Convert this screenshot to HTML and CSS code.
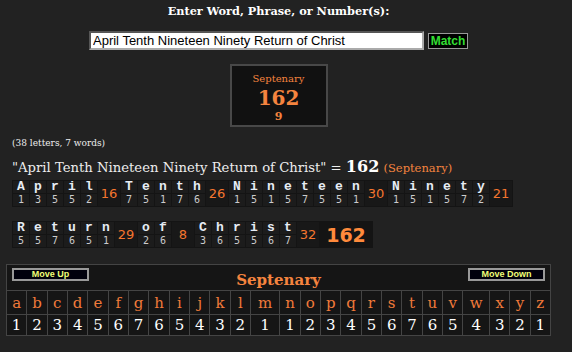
FILE: index.html
```html
<!DOCTYPE html>
<html lang="en">
<head>
    <meta charset="UTF-8">
    <meta name="viewport" content="width=device-width, initial-scale=1.0">
    <title>Gematria Calculator</title>
    <link rel="stylesheet" href="styles.css">
</head>
<body>
    <div class="top">
        <div class="prompt">Enter Word, Phrase, or Number(s):</div>
        <div class="form-row">
            <input type="text" class="phrase" value="April Tenth Nineteen Ninety Return of Christ">
            <button class="match">Match</button>
        </div>
        <div class="cipher-box">
            <div class="cipher-name">Septenary</div>
            <div class="cipher-total">162</div>
            <div class="cipher-root">9</div>
        </div>
    </div>

    <div class="summary">
        <div class="counts">(38 letters, 7 words)</div>
        <div class="phrase-line">"April Tenth Nineteen Ninety Return of Christ" = <b>162</b> <span class="cname">(Septenary)</span></div>
    </div>

    <table class="breakdown">
        <tr>
            <td>A</td><td>p</td><td>r</td><td>i</td><td>l</td><td class="sum" rowspan="2">16</td>
            <td>T</td><td>e</td><td>n</td><td>t</td><td>h</td><td class="sum" rowspan="2">26</td>
            <td>N</td><td>i</td><td>n</td><td>e</td><td>t</td><td>e</td><td>e</td><td>n</td><td class="sum" rowspan="2">30</td>
            <td>N</td><td>i</td><td>n</td><td>e</td><td>t</td><td>y</td><td class="sum" rowspan="2">21</td>
        </tr>
        <tr class="nums">
            <td>1</td><td>3</td><td>5</td><td>5</td><td>2</td>
            <td>7</td><td>5</td><td>1</td><td>7</td><td>6</td>
            <td>1</td><td>5</td><td>1</td><td>5</td><td>7</td><td>5</td><td>5</td><td>1</td>
            <td>1</td><td>5</td><td>1</td><td>5</td><td>7</td><td>2</td>
        </tr>
    </table>

    <table class="breakdown second">
        <tr>
            <td>R</td><td>e</td><td>t</td><td>u</td><td>r</td><td>n</td><td class="sum" rowspan="2">29</td>
            <td>o</td><td>f</td><td class="sum" rowspan="2">8</td>
            <td>C</td><td>h</td><td>r</td><td>i</td><td>s</td><td>t</td><td class="sum" rowspan="2">32</td>
            <td class="total" rowspan="2">162</td>
        </tr>
        <tr class="nums">
            <td>5</td><td>5</td><td>7</td><td>6</td><td>5</td><td>1</td>
            <td>2</td><td>6</td>
            <td>3</td><td>6</td><td>5</td><td>5</td><td>6</td><td>7</td>
        </tr>
    </table>

    <table class="chart">
        <tr class="chart-head">
            <td colspan="26">
                <div class="head-row">
                    <button class="move">Move Up</button>
                    <span class="chart-title">Septenary</span>
                    <button class="move">Move Down</button>
                </div>
            </td>
        </tr>
        <tr class="chart-letters">
            <td>a</td><td>b</td><td>c</td><td>d</td><td>e</td><td>f</td><td>g</td><td>h</td><td>i</td><td>j</td><td>k</td><td>l</td><td>m</td>
            <td>n</td><td>o</td><td>p</td><td>q</td><td>r</td><td>s</td><td>t</td><td>u</td><td>v</td><td>w</td><td>x</td><td>y</td><td>z</td>
        </tr>
        <tr class="chart-nums">
            <td>1</td><td>2</td><td>3</td><td>4</td><td>5</td><td>6</td><td>7</td><td>6</td><td>5</td><td>4</td><td>3</td><td>2</td><td>1</td>
            <td>1</td><td>2</td><td>3</td><td>4</td><td>5</td><td>6</td><td>7</td><td>6</td><td>5</td><td>4</td><td>3</td><td>2</td><td>1</td>
        </tr>
    </table>
</body>
</html>
```

FILE: styles.css
```css
body {
    margin: 0;
    background: #222;
    color: #eee;
    font-family: "DejaVu Serif", serif;
}
.top {
    width: 557px;
    text-align: center;
}
.prompt {
    padding-top: 4px;
    font-size: 11.3px;
    font-weight: bold;
    line-height: 14px;
    color: #fff;
}
.form-row {
    display: flex;
    justify-content: center;
    align-items: center;
    gap: 4px;
    margin-top: 13px;
}
.phrase {
    width: 335px;
    height: 19px;
    box-sizing: border-box;
    padding: 0 2px;
    border: 2px inset #aaa;
    font-family: "Liberation Sans", Arial, sans-serif;
    font-size: 13px;
    color: #000;
    background: #fff;
}
.match {
    width: 40px;
    height: 16px;
    padding: 0;
    border: 1px solid #999;
    background: #000;
    color: #33dd33;
    font-family: "Liberation Sans", Arial, sans-serif;
    font-size: 12px;
    font-weight: bold;
    line-height: 12px;
}
.cipher-box {
    width: 94px;
    height: 59px;
    margin: 14px auto 0;
    border: 2px solid #484848;
    background: #111;
    color: #f5843f;
}
.cipher-name {
    margin-top: 6px;
    font-size: 10px;
    line-height: 13px;
}
.cipher-total {
    font-size: 20px;
    font-weight: bold;
    line-height: 26px;
}
.cipher-root {
    font-size: 11px;
    font-weight: bold;
    line-height: 12px;
}
.summary {
    padding-left: 12px;
}
.counts {
    margin-top: 10px;
    font-size: 9px;
    line-height: 12px;
}
.phrase-line {
    margin-top: 9px;
    font-size: 13.2px;
    line-height: 18px;
}
.phrase-line b {
    font-size: 16px;
    color: #fff;
}
.cname {
    font-size: 11.5px;
    color: #f5843f;
}
.breakdown {
    margin: 3px 0 0 12px;
    border-spacing: 1px;
    background: #141414;
}
.breakdown.second {
    margin-top: 14px;
}
.breakdown td {
    width: 16px;
    height: 12px;
    padding: 0;
    background: #1c1c1c;
    text-align: center;
    font-family: "Liberation Mono", monospace;
    font-size: 13px;
    font-weight: bold;
    line-height: 12px;
    color: #e6ecf4;
}
.breakdown .nums td {
    font-family: "DejaVu Sans Mono", monospace;
    font-weight: normal;
    font-size: 10px;
    color: #ccc;
}
.breakdown td.sum {
    width: 22px;
    background: #181818;
    font-family: "DejaVu Sans", sans-serif;
    font-weight: normal;
    font-size: 13px;
    color: #f5762f;
}
.breakdown td.total {
    width: 52px;
    background: #141414;
    font-family: "DejaVu Sans", sans-serif;
    font-size: 19px;
    color: #ff8a3c;
}
.chart {
    width: 545px;
    margin: 16px 0 0 6px;
    border-collapse: collapse;
    background: #151515;
}
.chart td {
    border: 1px solid #444;
    padding: 0;
    text-align: center;
}
.chart-head td {
    height: 25px;
    vertical-align: top;
}
.head-row {
    display: flex;
    justify-content: space-between;
    align-items: flex-start;
    padding: 3px 5px 0 5px;
}
.move {
    width: 77px;
    height: 13px;
    padding: 0;
    border: 2px solid #999;
    background: #00000c;
    color: #f0ff77;
    font-family: "Liberation Sans", Arial, sans-serif;
    font-size: 9px;
    font-weight: bold;
    line-height: 9px;
}
.chart-title {
    margin-top: 3px;
    font-size: 15px;
    font-weight: bold;
    color: #f5843f;
}
.chart-letters td {
    height: 23px;
    font-size: 15px;
    color: #f07a3a;
}
.chart-nums td {
    height: 20px;
    font-size: 15px;
    color: #fff;
}
```
